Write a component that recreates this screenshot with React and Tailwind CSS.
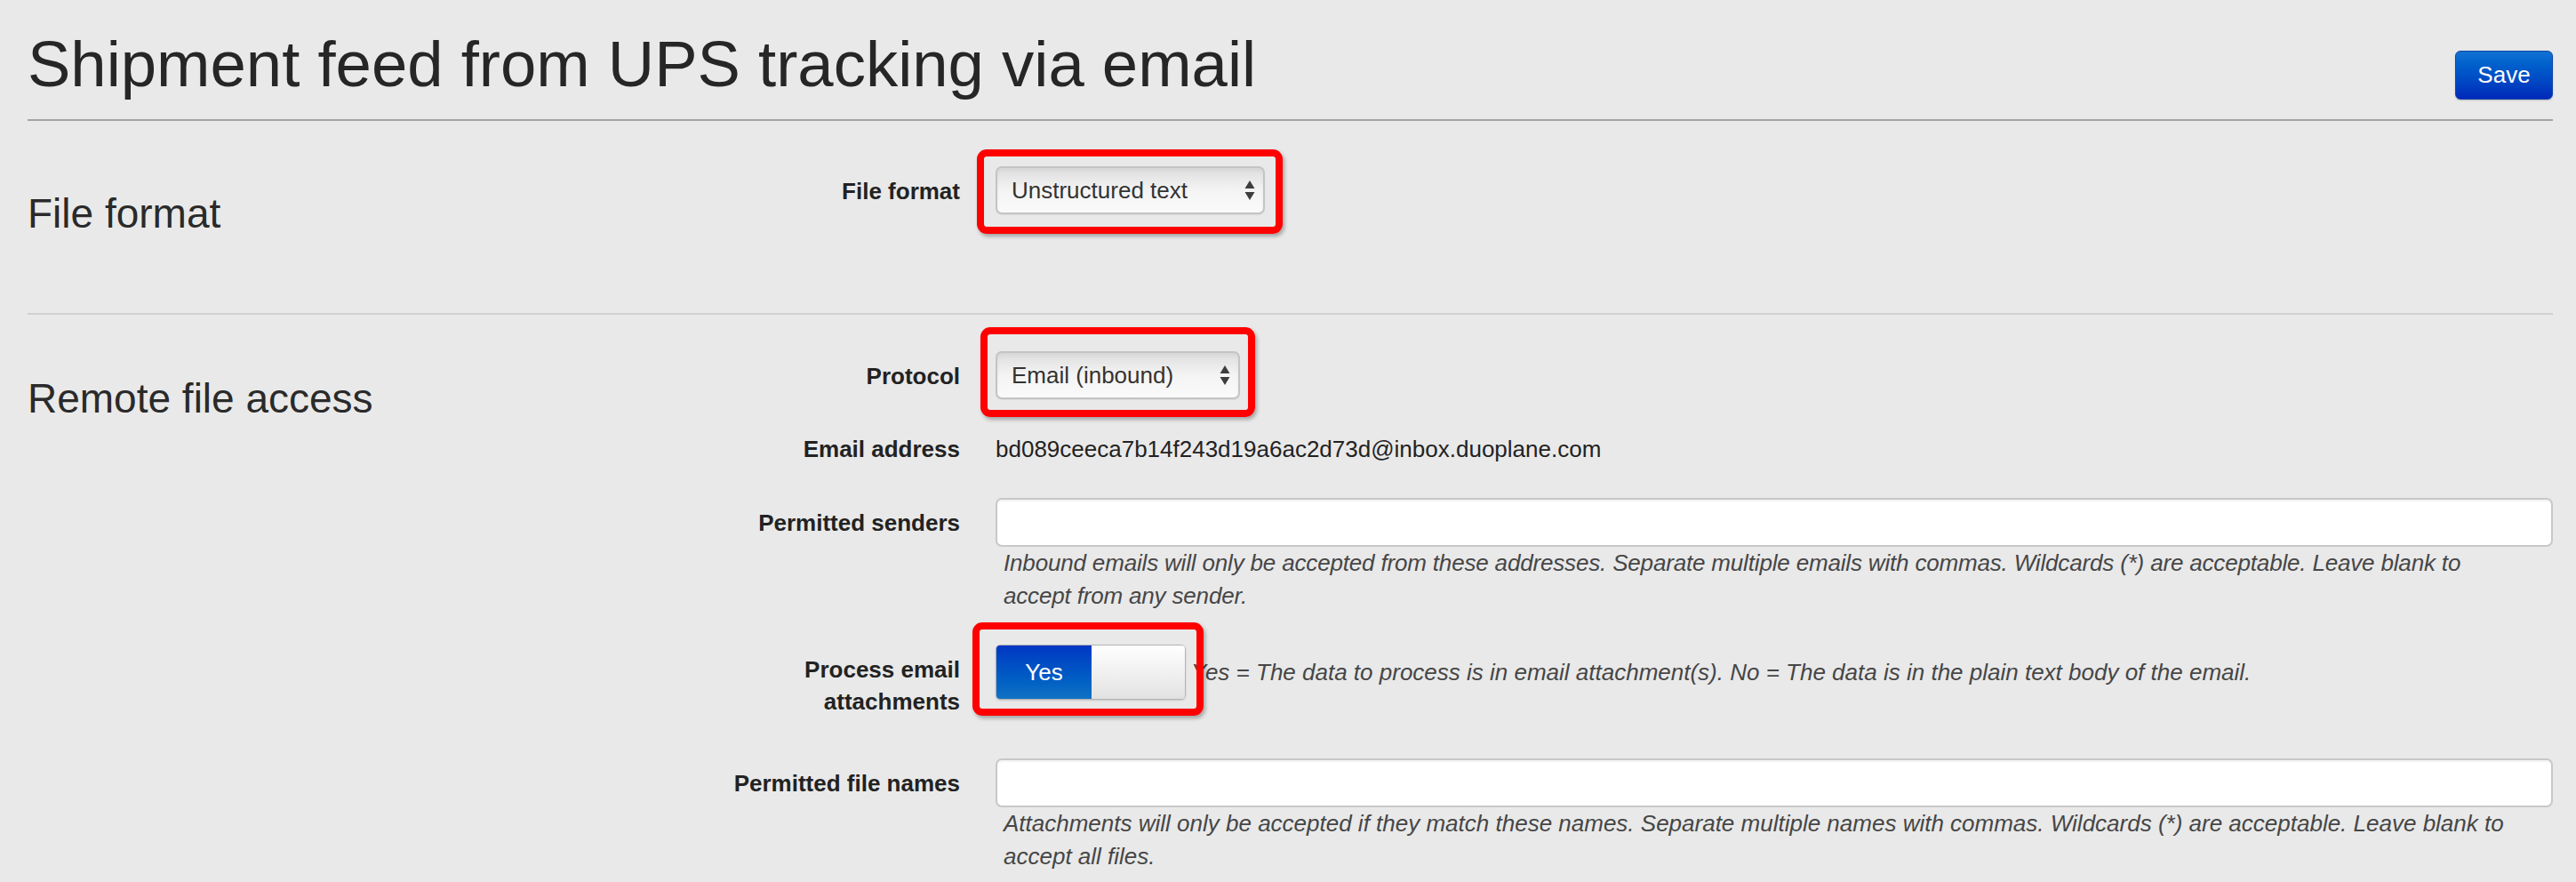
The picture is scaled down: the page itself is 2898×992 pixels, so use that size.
import React from 'react';

// Red annotation frame drawn over a control
const Callout = ({ className }) => (
  <span
    className={`pointer-events-none absolute rounded-[11px] border-[8px] border-[#ff0000] shadow-[2px_3px_4px_rgba(0,0,0,0.3)] ${className}`}
  />
);

const SelectArrows = () => (
  <svg width="12" height="22" viewBox="0 0 12 22" className="shrink-0">
    <path d="M6 0 L11.5 9 L0.5 9 Z" fill="#3d3d3d" />
    <path d="M0.5 13 L11.5 13 L6 22 Z" fill="#3d3d3d" />
  </svg>
);

const FakeSelect = ({ value, width, frame }) => (
  <div className={`relative ${width}`}>
    <div className="flex h-[54px] items-center justify-between rounded-[7px] border-2 border-[#c4c4c4] bg-linear-to-b from-[#dedede] via-[#f4f4f4] to-[#fafafa] pl-[16px] pr-[9px] text-[26px] text-[#333] shadow-[inset_0_3px_4px_rgba(0,0,0,0.04),0_1px_1px_rgba(0,0,0,0.06)]">
      <span>{value}</span>
      <SelectArrows />
    </div>
    <Callout className={frame} />
  </div>
);

const TextInput = () => (
  <div className="h-[55px] w-full rounded-[7px] border-2 border-[#c8c8c8] bg-white shadow-[inset_0_2px_2px_rgba(0,0,0,0.05)]" />
);

const Help = ({ children, className = '' }) => (
  <p className={`pl-[9px] text-[26px] italic leading-[37px] text-[#464646] ${className}`}>{children}</p>
);

const Row = ({ label, children, className = '' }) => (
  <div className={`grid grid-cols-[489px_1fr] gap-x-[40px] ${className}`}>
    <div className="pt-[10px] text-right text-[26px] font-bold leading-[36px] text-[#222]">{label}</div>
    <div>{children}</div>
  </div>
);

const App = () => {
  return (
    <div className="min-h-screen bg-[#e9e9e9] pl-[31px] pr-[26px] font-['Liberation_Sans',Arial,sans-serif] text-[#222]">
      {/* Header */}
      <header className="flex items-start justify-between border-b-2 border-[#a3a3a3] pb-[22px] pt-[36px]">
        <h1 className="text-[72.5px] leading-[72px] text-[#262626]">Shipment feed from UPS tracking via email</h1>
        <button className="mt-[21px] flex h-[55px] w-[110px] items-center justify-center rounded-[6px] border border-[#0b45a6] bg-linear-to-b from-[#1272d2] to-[#0027ba] text-[26px] text-white shadow-[0_1px_2px_rgba(0,0,0,0.2)]">
          Save
        </button>
      </header>

      {/* File format */}
      <section className="flex border-b-2 border-[#d0d0d0]">
        <h2 className="w-[560px] shrink-0 pt-[79px] text-[46px] leading-[50px] text-[#2a2a2a]">File format</h2>
        <div className="flex-1 pb-[111px] pt-[51px]">
          <Row label="File format">
            <FakeSelect value="Unstructured text" width="w-[303px]" frame="-left-[21px] -right-[20px] -top-[19px] -bottom-[22px]" />
          </Row>
        </div>
      </section>

      {/* Remote file access */}
      <section className="flex">
        <h2 className="w-[560px] shrink-0 pt-[69px] text-[46px] leading-[50px] text-[#2a2a2a]">Remote file access</h2>
        <div className="flex-1 pt-[41px]">
          <Row label="Protocol">
            <FakeSelect value="Email (inbound)" width="w-[275px]" frame="-left-[17px] -right-[17px] -top-[27px] -bottom-[20px]" />
          </Row>

          <Row label="Email address" className="mt-[28px]">
            <div className="pt-[10px] text-[26px] leading-[36px] text-[#222]">bd089ceeca7b14f243d19a6ac2d73d@inbox.duoplane.com</div>
          </Row>

          <Row label="Permitted senders" className="mt-[37px]">
            <TextInput />
            <Help className="tracking-[-0.17px]">
              Inbound emails will only be accepted from these addresses. Separate multiple emails with commas. Wildcards (*) are acceptable. Leave blank to
              <br />
              accept from any sender.
            </Help>
          </Row>

          <Row label={<>Process email<br />attachments</>} className="mt-[36px]">
            <div className="flex items-center">
              <div className="relative shrink-0">
                <div className="flex h-[62px] w-[214px] overflow-hidden rounded-[5px] border border-[#b3b3b3] shadow-[0_1px_2px_rgba(0,0,0,0.15)]">
                  <div className="flex w-[107px] items-center justify-center bg-linear-to-b from-[#0335c3] to-[#1272c4] text-[26px] text-white">Yes</div>
                  <div className="flex-1 bg-linear-to-b from-white to-[#e2e2e2]" />
                </div>
                <Callout className="-left-[26px] -right-[20px] -top-[25px] -bottom-[18px]" />
              </div>
              <span className="ml-[6px] text-[26px] italic text-[#464646]">
                Yes = The data to process is in email attachment(s). No = The data is in the plain text body of the email.
              </span>
            </div>
          </Row>

          <Row label="Permitted file names" className="mt-[46px]">
            <TextInput />
            <Help>
              Attachments will only be accepted if they match these names. Separate multiple names with commas. Wildcards (*) are acceptable. Leave blank to
              <br />
              accept all files.
            </Help>
          </Row>
        </div>
      </section>
    </div>
  );
};

export default App;
